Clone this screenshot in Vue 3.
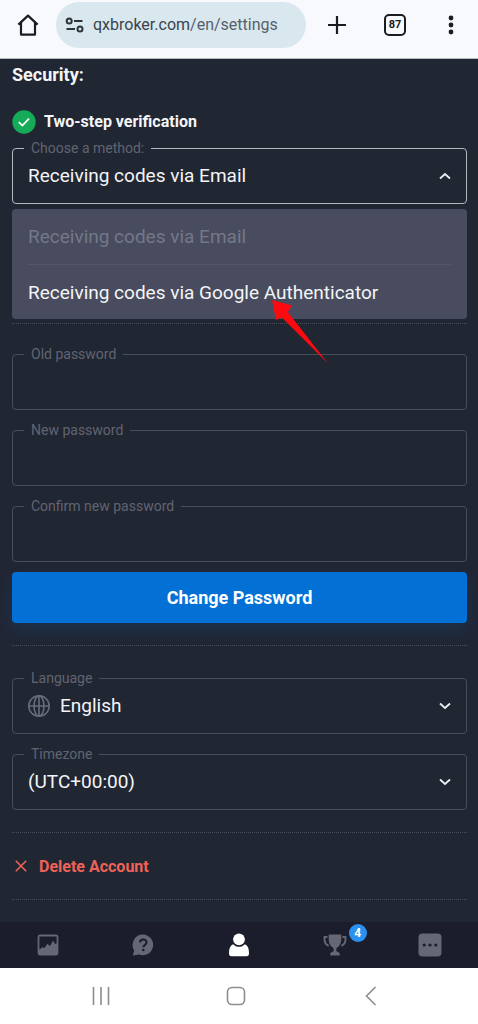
<script setup>
import { ref } from 'vue'

const methods = ['Receiving codes via Email', 'Receiving codes via Google Authenticator']
const method = ref(methods[0])
const menuOpen = ref(true)

const passwordFields = ref([
  { id: 'old-password', label: 'Old password', value: '' },
  { id: 'new-password', label: 'New password', value: '' },
  { id: 'confirm-password', label: 'Confirm new password', value: '' }
])

const language = ref('English')
const timezone = ref('(UTC+00:00)')

function choose(value) {
  method.value = value
  menuOpen.value = false
}
</script>

<template>
  <div class="screen">
    <header class="browser">
      <button class="tool home" aria-label="Home">
        <svg width="24" height="24" viewBox="0 0 24 24" fill="none" stroke="#1b1c20" stroke-width="2.2" stroke-linejoin="round">
          <path d="M2.4 11.6 12 2.6l9.6 9M5 9.8V21.600h14V9.800" />
        </svg>
      </button>
      <div class="address">
        <svg width="20" height="16" viewBox="0 0 20 16" fill="none" stroke="#2d353b" stroke-width="2">
          <circle cx="4.200" cy="4" r="2.500" />
          <path d="M9 4h8.500M1.500 12H10" />
          <circle cx="15" cy="12" r="2.500" />
        </svg>
        <span class="url">qxbroker.com<span class="path">/en/settings</span></span>
      </div>
      <button class="tool" aria-label="New tab">
        <svg width="20" height="20" viewBox="0 0 20 20" fill="none" stroke="#1b1c20" stroke-width="2.200">
          <path d="M10 1v18M1 10h18" />
        </svg>
      </button>
      <button class="tool" aria-label="Open tabs"><span class="tabs">87</span></button>
      <button class="tool more" aria-label="Menu">
        <svg width="6" height="20" viewBox="0 0 6 20" fill="#1b1c20">
          <circle cx="3" cy="3" r="2.400" /><circle cx="3" cy="10" r="2.400" /><circle cx="3" cy="17" r="2.400" />
        </svg>
      </button>
    </header>

    <main class="content">
      <h1>Security:</h1>
      <div class="two-step">
        <svg width="24" height="24" viewBox="0 0 24 24">
          <circle cx="12" cy="12" r="11.700" fill="#15ab59" />
          <path d="M6.800 12.200l3.600 3.400 6.600-7" fill="none" stroke="#fff" stroke-width="1.800" />
        </svg>
        <h2>Two-step verification</h2>
      </div>

      <fieldset class="field active">
        <legend><label for="method">Choose a method:</label></legend>
        <div class="control">
          <select id="method" v-model="method" @mousedown.prevent="menuOpen = !menuOpen">
            <option v-for="item in methods" :key="item">{{ item }}</option>
          </select>
          <svg class="chevron" :class="{ up: menuOpen }" width="12" height="8" viewBox="0 0 12 8"><path d="M1 1.500l5 4.500 5-4.500" /></svg>
        </div>
      </fieldset>

      <ul v-if="menuOpen" class="menu">
        <li v-for="(item, index) in methods" :key="item">
          <button :disabled="item === method" @click="choose(item)">{{ item }}</button>
          <svg v-if="index === 1" class="pointer" width="57" height="64" viewBox="0 0 57 64" aria-hidden="true">
            <path d="M0 0l20 5.600-4.200 6.400L56 63.500 9.800 17.400 4 20z" fill="#fb0a10" />
          </svg>
        </li>
      </ul>

      <hr class="after-menu" />

      <form class="group" @submit.prevent>
        <fieldset v-for="field in passwordFields" :key="field.id" class="field">
          <legend><label :for="field.id">{{ field.label }}</label></legend>
          <div class="control">
            <input :id="field.id" v-model="field.value" type="password" />
          </div>
        </fieldset>
        <button class="submit" type="submit">Change Password</button>
      </form>

      <hr />

      <div class="group">
        <fieldset class="field">
          <legend><label for="language">Language</label></legend>
          <div class="control">
            <svg class="globe" width="22" height="22" viewBox="0 0 22 22" fill="none" stroke="#686c7a" stroke-width="1.600">
              <circle cx="11" cy="11" r="10.200" />
              <ellipse cx="11" cy="11" rx="5" ry="10.200" />
              <path d="M11 1v20M1 11h20" />
            </svg>
            <select id="language" v-model="language"><option>English</option></select>
            <svg class="chevron" width="12" height="8" viewBox="0 0 12 8"><path d="M1 1.500l5 4.500 5-4.500" /></svg>
          </div>
        </fieldset>
        <fieldset class="field">
          <legend><label for="timezone">Timezone</label></legend>
          <div class="control">
            <select id="timezone" v-model="timezone"><option>(UTC+00:00)</option></select>
            <svg class="chevron" width="12" height="8" viewBox="0 0 12 8"><path d="M1 1.500l5 4.500 5-4.500" /></svg>
          </div>
        </fieldset>
      </div>

      <hr />

      <button class="delete">
        <svg width="12" height="12" viewBox="0 0 12 12" fill="none" stroke="#ee6257" stroke-width="1.600"><path d="M.8.8l10.400 10.400M11.200.8L.8 11.200" /></svg>
        Delete Account
      </button>

      <hr />
    </main>

    <nav class="app-nav">
      <a href="#trade" aria-label="Trade">
        <svg width="22" height="22" viewBox="0 0 22 22" fill="#666775">
          <path fill-rule="evenodd" d="M3 .6h16a2.400 2.400 0 0 1 2.400 2.400v16a2.400 2.400 0 0 1-2.400 2.400H3A2.400 2.400 0 0 1 .6 19V3A2.400 2.400 0 0 1 3 .6zM2.400 2.600v13l3-2.400 2.200.8 2.700-4.200 2.700 2.200 3.200-5.400 1.800 3.400 1.600-.8V2.600z" />
        </svg>
      </a>
      <a href="#support" aria-label="Support">
        <svg width="22" height="22" viewBox="0 0 22 22">
          <path d="M11.200.6a10.300 10.300 0 1 1-4.300 19.800L.8 21.400l1.300-5.200A10.300 10.300 0 0 1 11.200.6z" fill="#666775" />
          <path d="M8 8.600c0-4 6.600-3.900 6.600-.3 0 2.500-3.300 2.600-3.300 5" fill="none" stroke="#1b1d2c" stroke-width="2" />
          <circle cx="11.300" cy="16" r="1.300" fill="#1b1d2c" />
        </svg>
      </a>
      <a href="#account" aria-label="Account" aria-current="page">
        <svg width="22" height="24" viewBox="0 0 22 24" fill="#fff">
          <circle cx="11" cy="6.300" r="5.900" />
          <path d="M5.100 11.200c3.300 3.400 8.500 3.400 11.800 0 3 1.300 4.100 4.300 4.100 8.800 0 2.300-.7 3.200-2.600 3.200H3.600C1.700 23.200 1 22.300 1 20c0-4.500 1.100-7.500 4.100-8.800z" />
        </svg>
      </a>
      <a href="#tournaments" aria-label="Tournaments">
        <span class="trophy">
          <svg width="24" height="22" viewBox="0 0 24 22">
            <path d="M5.700.6h12.600v4.200c0 4.800-1.900 7.500-4.600 9l-.6 3.200 3.600 2v2.400H7.300V19l3.600-2-.6-3.200c-2.700-1.500-4.600-4.200-4.600-9z" fill="#666775" />
            <path d="M4.500 3H1.600C1 7.500 2.600 10.500 5.700 11.800M19.500 3h2.900c.6 4.500-1 7.500-4.100 8.800" fill="none" stroke="#666775" stroke-width="1.900" />
          </svg>
          <span class="badge">4</span>
        </span>
      </a>
      <a href="#more" aria-label="More">
        <svg width="24" height="24" viewBox="0 0 24 24">
          <rect x=".5" y=".5" width="23" height="23" rx="4" fill="#666775" />
          <circle cx="6.200" cy="12" r="1.600" fill="#1b1d2c" /><circle cx="12" cy="12" r="1.600" fill="#1b1d2c" /><circle cx="17.800" cy="12" r="1.600" fill="#1b1d2c" />
        </svg>
      </a>
    </nav>

    <footer class="system-nav">
      <button aria-label="Recent apps">
        <svg width="20" height="20" viewBox="0 0 20 20" stroke="#8d8d8d" stroke-width="1.600"><path d="M2.500 1v18M10 1v18M17.500 1v18" /></svg>
      </button>
      <button aria-label="Home screen">
        <svg width="20" height="20" viewBox="0 0 20 20" fill="none" stroke="#8d8d8d" stroke-width="1.600"><rect x="1.500" y="1.500" width="17" height="17" rx="4.500" /></svg>
      </button>
      <button aria-label="Back">
        <svg width="20" height="20" viewBox="0 0 20 20" fill="none" stroke="#8d8d8d" stroke-width="1.600"><path d="M14.500 1L5.500 10l9 9" /></svg>
      </button>
    </footer>
  </div>
</template>

<style>
body {
  background: #212633;
}
</style>

<style scoped>
.screen,
.screen * {
  box-sizing: border-box;
}

.screen {
  display: flex;
  flex-direction: column;
  min-height: 100vh;
  background: #212633;
  color: #f4f5f7;
  font-family: Roboto, "Liberation Sans", sans-serif;
}

svg {
  display: block;
  flex: none;
}

button,
select,
input {
  margin: 0;
  padding: 0;
  border: 0;
  background: none;
  color: inherit;
  font: inherit;
}

.browser {
  display: flex;
  align-items: center;
  padding: 2px 0 10px;
  border-bottom: 1px solid #b9bdc4;
  background: #f8f9fd;
}

.tool {
  display: flex;
  flex: none;
  align-items: center;
  justify-content: center;
  width: 58px;
  height: 46px;
}

.tool.home {
  width: 56px;
}

.tool.more {
  width: 54px;
}

.address {
  display: flex;
  flex: 1;
  align-items: center;
  gap: 8px;
  min-width: 0;
  height: 46px;
  margin-right: 2px;
  padding-left: 9px;
  border-radius: 23px;
  background: #d9e7ef;
}

.url {
  color: #3a444b;
  font-size: 16px;
  line-height: 24px;
  white-space: nowrap;
}

.path {
  color: #56616a;
}

.tabs {
  width: 22px;
  height: 22px;
  border: 2px solid #1b1c20;
  border-radius: 5px;
  color: #1b1c20;
  font-size: 11px;
  font-weight: 700;
  line-height: 18px;
  text-align: center;
}

.content {
  flex: 1;
  padding: 4px 11px 0 12px;
}

h1,
h2 {
  margin: 0;
  font-weight: 700;
  line-height: 24px;
}

h1 {
  font-size: 18px;
}

h2 {
  font-size: 16px;
}

.two-step {
  display: flex;
  align-items: center;
  gap: 8px;
  margin: 23px 0 4px;
}

.field {
  min-width: 0;
  margin: 0;
  padding: 0;
  border: 1px solid #4a4e5a;
  border-radius: 4px;
}

.field.active {
  border-color: #b4b7c0;
}

legend {
  margin-left: 11px;
  padding: 0 7px;
  color: #606471;
  font-size: 14px;
  line-height: 20px;
}

label {
  display: block;
}

.control {
  display: flex;
  align-items: center;
  height: 45px;
  padding: 0 15px 10px;
  font-size: 19px;
}

.control select,
.control input {
  flex: 1;
  min-width: 0;
  height: 34px;
  appearance: none;
  outline: none;
}

.globe {
  margin-right: 10px;
}

.chevron {
  fill: none;
  stroke: #eceef2;
  stroke-width: 1.8;
}

.chevron.up {
  transform: rotate(180deg);
}

.menu {
  margin: 5px 0 0;
  padding: 0 16px;
  border-radius: 4px;
  background: #484c5e;
  list-style: none;
}

.menu li {
  position: relative;
  height: 55px;
}

.menu li + li {
  border-top: 1px solid #525667;
}

.menu button {
  width: 100%;
  height: 100%;
  font-size: 19px;
  text-align: left;
}

.menu button:disabled {
  color: #747889;
}

.pointer {
  position: absolute;
  top: 35px;
  left: 244px;
  pointer-events: none;
}

hr {
  height: 0;
  margin: 22px 0;
  border: 0;
  border-top: 1px dotted #4a4f5b;
}

.after-menu {
  margin: 4px 0 20px;
}

.group {
  display: flex;
  flex-direction: column;
  gap: 10px;
}

.submit {
  height: 51px;
  border-radius: 4px;
  background: #0370d6;
  box-shadow: 0 8px 16px rgba(3, 112, 214, 0.16);
  color: #fff;
  font-size: 18px;
  font-weight: 700;
}

.delete {
  display: flex;
  align-items: center;
  gap: 12px;
  height: 22px;
  padding-left: 3px;
  color: #ee6257;
  font-size: 16px;
  font-weight: 700;
}

.app-nav {
  display: grid;
  grid-template-columns: repeat(5, 1fr);
  height: 46px;
  background: #1b1d2c;
}

.app-nav a {
  display: flex;
  align-items: center;
  justify-content: center;
}

.trophy {
  position: relative;
}

.badge {
  position: absolute;
  top: -10px;
  left: 26px;
  width: 18px;
  height: 18px;
  border-radius: 50%;
  background: #2b91f0;
  color: #fff;
  font-size: 12px;
  font-weight: 700;
  line-height: 18px;
  text-align: center;
}

.system-nav {
  display: grid;
  grid-template-columns: repeat(3, 1fr);
  height: 56px;
  padding: 0 40px 0 34px;
  background: #fff;
}

.system-nav button {
  display: flex;
  align-items: center;
  justify-content: center;
}
</style>
